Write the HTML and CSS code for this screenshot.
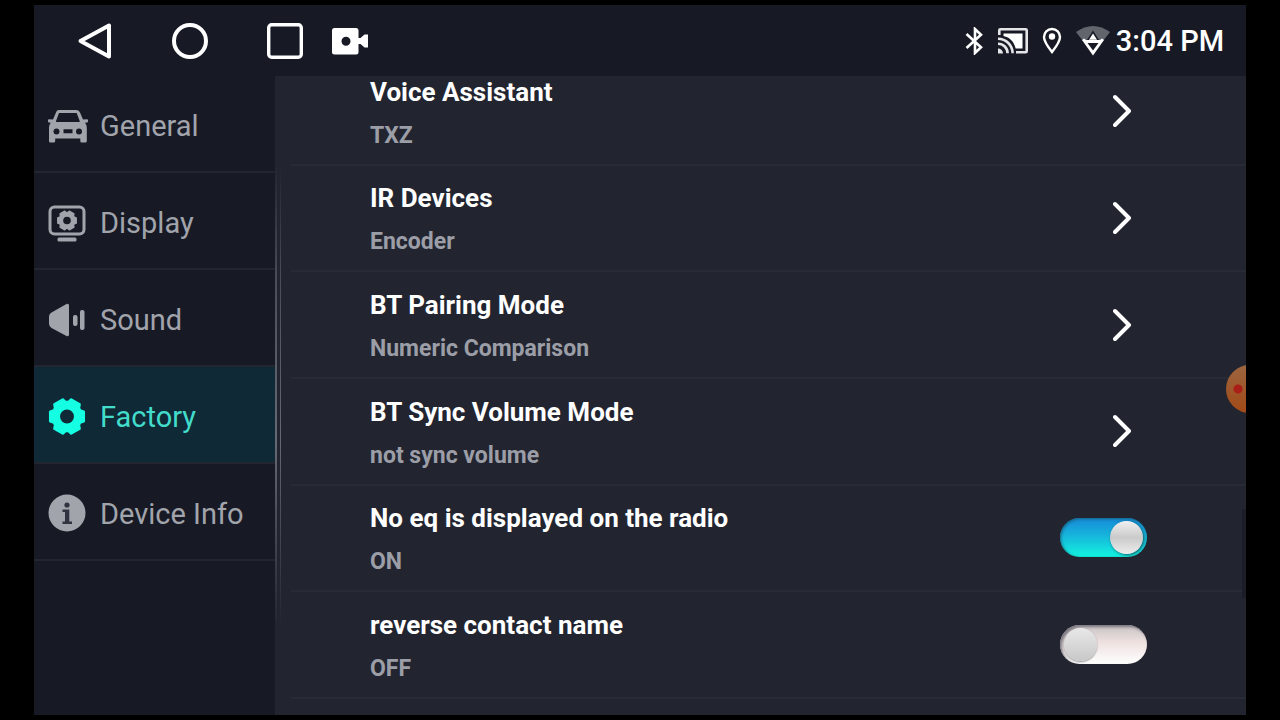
FILE: index.html
```html
<!DOCTYPE html>
<html lang="en">
<head>
<meta charset="utf-8">
<meta name="viewport" content="width=device-width, initial-scale=1">
<title>Factory settings</title>
<link rel="stylesheet" href="styles.css">
</head>
<body>
<div class="screen">
  <header class="topbar">
    <nav class="topbar-nav" aria-label="System">
      <button class="icon-button" type="button" aria-label="Back"><svg width="36" height="40" viewBox="0 0 36 40"><path d="M32 4.500v31L3.500 20z" fill="none" stroke="#fff" stroke-width="4" stroke-linejoin="round"/></svg></button>
      <button class="icon-button" type="button" aria-label="Home"><svg width="36" height="40" viewBox="0 0 36 40"><circle cx="18" cy="20" r="16" fill="none" stroke="#fff" stroke-width="4"/></svg></button>
      <button class="icon-button" type="button" aria-label="Recent apps"><svg width="36" height="40" viewBox="0 0 36 40"><rect x="1.700" y="3.700" width="32.600" height="32.600" rx="3" fill="none" stroke="#fff" stroke-width="3.400"/></svg></button>
      <button class="icon-button icon-button-record" type="button" aria-label="Record"><svg width="36" height="40" viewBox="0 0 36 40"><path fill="#fff" fill-rule="evenodd" d="M2.500 7H24q2.500 0 2.500 2.500V17l2 0 4-3.500H36v13h-3.500l-4-3.500-2 0v8q0 2.500-2.500 2.500H2.500Q0 33.500 0 31V9.500Q0 7 2.500 7zM14 15.700a4.500 4.500 0 1 0 0 9 4.500 4.500 0 0 0 0-9z"/></svg></button>
    </nav>
    <div class="status">
      <svg width="18" height="28" viewBox="0 0 18 28" role="img" aria-label="Bluetooth"><path d="M1.500 7 16 20.300 10 26V2l6 5.700L1.500 21" fill="none" stroke="#fff" stroke-width="2.600"/></svg>
      <svg class="status-cast" width="30" height="26" viewBox="0 0 30 26" role="img" aria-label="Casting"><g fill="none" stroke="#e4e5e8" stroke-width="2.600"><path d="M1.300 7V2.300q0-1 1-1h25.400q1 0 1 1v20.900q0 1-1 1H18"/><path d="M0 10.700A14.600 14.600 0 0 1 14.600 25.300M0 15.700a9.600 9.600 0 0 1 9.600 9.600"/></g><path d="M5.500 5.500h19v15h-6.800C15.800 13.500 12 9.500 5.500 8z" fill="#fff"/><path d="M0 20.500a5 5 0 0 1 5 5H0z" fill="#e4e5e8"/></svg>
      <svg class="status-pin" width="20" height="28" viewBox="0 0 20 28" role="img" aria-label="Location"><path d="M10 2c4.600 0 8 3.500 8 8 0 5-4.500 10.500-8 15-3.500-4.500-8-10-8-15 0-4.500 3.400-8 8-8z" fill="none" stroke="#fff" stroke-width="2.400"/><circle cx="10" cy="9.500" r="3.200" fill="#fff"/></svg>
      <svg class="status-wifi" width="34" height="30" viewBox="0 0 34 30" role="img" aria-label="Wi-Fi"><path d="M0 6Q17-6 34 6L27 15H7z" fill="#63656d"/><path d="M11.500 14.500 17 6l5.500 8.500z" fill="#fff" stroke="#171a25" stroke-width="1.500"/><path d="M6 14l2-1.500L10 14h14l2-1.500 2 1.500-11 15.500z" fill="#fff"/><path d="M11.500 17h11L17 24.500z" fill="#171a25"/></svg>
      <time class="clock">3:04 PM</time>
    </div>
  </header>
  <div class="body">
    <nav class="sidebar" aria-label="Settings sections">
      <a class="section" href="#general"><svg width="40" height="40" viewBox="0 0 40 40"><path fill="currentColor" fill-rule="evenodd" d="M10.500 4h18q2.600 0 3.500 2.500L35 13.500l4-.3q1 0 1 1v1.300q0 1-1 1l-2 .2q1.800 2 1.800 5V35q0 1.500-1.500 1.500h-3.500q-1.500 0-1.500-1.500v-2.500H7.200V35q0 1.500-1.500 1.500H2.500Q1 36.500 1 35V21.700q0-3 1.800-5l-1.800-.2q-1 0-1-1v-1.300q0-1 1-1l4 .3 3-7Q8.500 4 10.500 4zM11 7 8 15q-.3 1 .5 1h22.700q.8 0 .5-1l-3-8zM8.500 22.400a3 3 0 1 0 0 6 3 3 0 0 0 0-6zM31 22.400a3 3 0 1 0 0 6 3 3 0 0 0 0-6zM15.500 23.300v4h9v-4z"/></svg><span>General</span></a>
      <a class="section" href="#display"><svg width="40" height="40" viewBox="0 0 40 40"><rect x="2" y="4" width="34" height="27" rx="4.500" fill="none" stroke="currentColor" stroke-width="3"/><rect x="9.500" y="34.500" width="19" height="4" rx="1.500" fill="currentColor"/><path transform="translate(19 17.500) scale(.55)" fill="currentColor" fill-rule="evenodd" stroke="currentColor" stroke-width="2.500" stroke-linejoin="round" d="M16.800-4.800V4.800L13.100 6.100 11.900 8.300 12.600 12.200 4.200 17 1.300 14.400h-2.600L-4.200 17-12.600 12.200-11.900 8.300-13.100 6.100-16.800 4.800v-9.600l3.700-1.300 1.200-2.200-.7-3.900L-4.200-17l2.900 2.600h2.600L4.200-17l8.400 4.800-.7 3.900 1.200 2.200zM0-8.200a8.200 8.200 0 1 0 0 16.400 8.200 8.200 0 0 0 0-16.400z"/></svg><span>Display</span></a>
      <a class="section" href="#sound"><svg width="40" height="40" viewBox="0 0 40 40"><path fill="currentColor" d="M3.500 12.500 18.500 4q2.500-1 2.500 1.500v29q0 2.500-2.500 1.500L3.500 28Q1 26.500 1 23.500v-7q0-2.700 2.500-4z"/><rect x="25" y="15" width="4.500" height="11" rx="2" fill="currentColor"/><rect x="32" y="10" width="4.500" height="20" rx="2" fill="currentColor"/></svg><span>Sound</span></a>
      <a class="section section-active" href="#factory" aria-current="page"><svg width="40" height="40" viewBox="0 0 40 40"><path transform="translate(19 19.500)" fill="currentColor" fill-rule="evenodd" stroke="currentColor" stroke-width="2.500" stroke-linejoin="round" d="M16.800-4.800V4.800L13.100 6.100 11.900 8.300 12.600 12.200 4.200 17 1.300 14.400h-2.600L-4.200 17-12.600 12.200-11.900 8.300-13.100 6.100-16.800 4.800v-9.600l3.700-1.300 1.200-2.200-.7-3.900L-4.200-17l2.900 2.600h2.600L4.200-17l8.400 4.800-.7 3.900 1.200 2.200zM0-8.200a8.200 8.200 0 1 0 0 16.400 8.200 8.200 0 0 0 0-16.400z"/></svg><span>Factory</span></a>
      <a class="section" href="#device"><svg width="40" height="40" viewBox="0 0 40 40"><circle cx="19" cy="19" r="18.500" fill="currentColor"/><circle cx="19" cy="11" r="2.600" fill="#303340"/><path d="M14.500 15.500h6.800v12H24V30h-9.500v-2.500H17v-9.500h-2.500z" fill="#303340"/></svg><span>Device Info</span></a>
    </nav>
    <main class="content">
      <ul class="settings">
        <li class="row"><div class="labels"><h2>Voice Assistant</h2><p>TXZ</p></div><button class="open" type="button" aria-label="Voice Assistant"><svg width="20" height="34" viewBox="0 0 20 34"><path d="M2 3 16 17 2 31"/></svg></button></li>
        <li class="row"><div class="labels"><h2>IR Devices</h2><p>Encoder</p></div><button class="open" type="button" aria-label="IR Devices"><svg width="20" height="34" viewBox="0 0 20 34"><path d="M2 3 16 17 2 31"/></svg></button></li>
        <li class="row"><div class="labels"><h2>BT Pairing Mode</h2><p>Numeric Comparison</p></div><button class="open" type="button" aria-label="BT Pairing Mode"><svg width="20" height="34" viewBox="0 0 20 34"><path d="M2 3 16 17 2 31"/></svg></button></li>
        <li class="row"><div class="labels"><h2>BT Sync Volume Mode</h2><p>not sync volume</p></div><button class="open" type="button" aria-label="BT Sync Volume Mode"><svg width="20" height="34" viewBox="0 0 20 34"><path d="M2 3 16 17 2 31"/></svg></button></li>
        <li class="row"><div class="labels"><h2><label for="no-eq">No eq is displayed on the radio</label></h2><p>ON</p></div><input class="switch" id="no-eq" type="checkbox" role="switch" checked></li>
        <li class="row"><div class="labels"><h2><label for="reverse-name">reverse contact name</label></h2><p>OFF</p></div><input class="switch" id="reverse-name" type="checkbox" role="switch"></li>
      </ul>
      <span class="scrollbar"></span>
    </main>
  </div>
  <button class="bubble" type="button" aria-label="Recorder"></button>
</div>
</body>
</html>
```
FILE: styles.css
```css
*,
*::before {
  box-sizing: border-box;
}

body {
  margin: 0;
  padding: 5px 34px;
  height: 100vh;
  background: #000;
  color: #fff;
  font-family: Roboto, "Liberation Sans", sans-serif;
}

button {
  padding: 0;
  border: 0;
  background: none;
  cursor: pointer;
}

svg {
  display: block;
  flex: none;
}

.screen {
  position: relative;
  display: flex;
  flex-direction: column;
  height: 100%;
  overflow: hidden;
  background: #171a25;
}

.topbar {
  display: flex;
  flex: none;
  align-items: center;
  justify-content: space-between;
  height: 71px;
  padding: 0 22px 0 43px;
}

.topbar-nav {
  display: flex;
  gap: 59px;
}

.icon-button-record {
  margin-left: -30px;
}

.status {
  display: flex;
  align-items: center;
}

.status-cast {
  margin-left: 15px;
}

.status-pin {
  margin-left: 14px;
}

.status-wifi {
  margin-left: 14px;
}

.clock {
  margin-left: 6px;
  font-size: 29px;
  font-weight: 500;
  line-height: 36px;
}

.body {
  display: flex;
  flex: 1;
  min-height: 0;
}

.sidebar {
  flex: none;
  width: 241px;
}

.section {
  display: flex;
  align-items: center;
  gap: 12px;
  height: 97px;
  padding: 4px 0 0 14px;
  border-bottom: 2px solid #222630;
  color: #a2a4ac;
  font-size: 29px;
  line-height: 36px;
  text-decoration: none;
}

.section-active {
  background: #102936;
  color: #42dccb;
}

.section-active svg {
  color: #15ffe3;
}

.content {
  position: relative;
  flex: 1;
  min-width: 0;
  overflow: hidden;
  background: #222530;
}

.content::before {
  content: "";
  position: absolute;
  top: 90px;
  left: 0;
  width: 6px;
  height: 460px;
  border-right: 1px solid;
  border-left: 2px solid;
  border-image: linear-gradient(#222530, #4b4e59 25%, #666974 60%, #222530) 1;
}

.settings {
  display: grid;
  grid-auto-rows: 1fr;
  height: 640px;
  margin: -17px 0 0;
  padding: 0 0 0 16px;
  list-style: none;
}

.row {
  display: flex;
  align-items: center;
  justify-content: space-between;
  padding: 0 99px 0 79px;
  border-bottom: 2px solid #272b36;
}

.labels {
  padding-top: 5px;
}

.labels h2,
.labels p {
  margin: 0;
  font-weight: 700;
}

.labels h2 {
  font-size: 26px;
  line-height: 44px;
}

.labels p {
  color: #9c9ea7;
  font-size: 23px;
  line-height: 44px;
}

.open {
  margin-right: 14px;
}

.open path {
  fill: none;
  stroke: #fff;
  stroke-width: 4;
  stroke-linecap: round;
  stroke-linejoin: round;
}

.switch {
  appearance: none;
  display: flex;
  align-items: center;
  width: 87px;
  height: 39px;
  margin: 0;
  padding: 0 4px;
  border-radius: 20px;
  background: linear-gradient(#c9c2c4, #eee2e0 45%, #fff);
  box-shadow: inset 2px 2px 3px #77747c;
  cursor: pointer;
}

.switch::before {
  content: "";
  width: 33px;
  height: 33px;
  border-radius: 50%;
  background: linear-gradient(#e8e8e8, #c8c8c8);
  box-shadow: 0 1px 2px #8d8b90;
}

.switch:checked {
  justify-content: flex-end;
  background: linear-gradient(#1789d8, #17b5dc 45%, #12f4df);
  box-shadow: inset 1px 1px 3px #176480;
}

.switch:checked::before {
  background: linear-gradient(#f0f0f0, #cacaca 50%, #ededed);
  box-shadow: 1px 1px 3px #17535f;
}

.scrollbar {
  position: absolute;
  top: 433px;
  right: 0;
  width: 4px;
  height: 89px;
  background: #1b1d29;
}

.bubble {
  position: absolute;
  top: 360px;
  right: -28px;
  width: 48px;
  height: 48px;
  border-radius: 50%;
  background: radial-gradient(circle at 12px 24px, #a91e16 4px, transparent 5px), linear-gradient(#9c6540, #a24916);
}
```
